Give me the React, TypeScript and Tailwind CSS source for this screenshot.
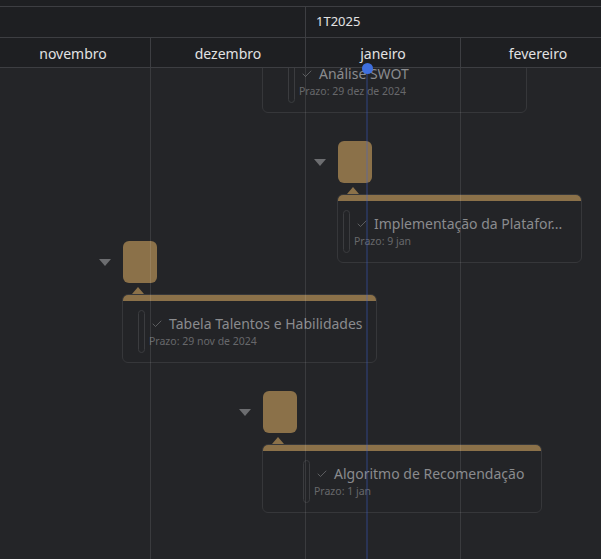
import { Check } from 'lucide-react'

type Task = {
  title: string
  due: string
  left: number
  top: number
  width: number
  inset: number
}

const TASKS: Task[] = [
  { title: 'Análise SWOT', due: 'Prazo: 29 dez de 2024', left: 262, top: -24, width: 265, inset: 25 },
  { title: 'Implementação da Platafor...', due: 'Prazo: 9 jan', left: 337, top: 126, width: 245, inset: 5 },
  { title: 'Tabela Talentos e Habilidades', due: 'Prazo: 29 nov de 2024', left: 122, top: 226, width: 255, inset: 15 },
  { title: 'Algoritmo de Recomendação', due: 'Prazo: 1 jan', left: 262, top: 376, width: 280, inset: 40 }
]

const MONTHS = ['novembro', 'dezembro', 'janeiro', 'fevereiro']

const TaskCard = ({ task }: { task: Task }): React.ReactElement => (
  <div className="absolute" style={{ left: task.left, top: task.top, width: task.width }}>
    {/* collapse caret */}
    <div className="absolute left-[-23px] top-[-35px] w-0 h-0 border-l-[6px] border-r-[6px] border-t-[7px] border-l-transparent border-r-transparent border-t-[#6c6d70]" />
    {/* milestone square */}
    <div className="absolute left-px top-[-53px] w-[34px] h-[42px] rounded-[6px] bg-[#8b7149]" />
    <div className="absolute left-[10px] top-[-7px] w-0 h-0 border-l-[6px] border-r-[6px] border-b-[7px] border-l-transparent border-r-transparent border-b-[#8b7149]" />
    <div className="h-[69px] rounded-md border border-[#36373a] overflow-hidden bg-[#232427]">
      <div className="h-[6px] bg-[#8b7149]" />
      <div className="flex pt-[9px]" style={{ paddingLeft: task.inset }}>
        <div className="w-[7px] h-[43px] rounded-full border border-[#3b3c3f] shrink-0" />
        <div className="ml-[4px] mt-[5px] flex flex-col min-w-0">
          <div className="flex items-center pl-[2px] h-[18px]">
            <Check size={12} strokeWidth={1.5} className="text-[#6f7073] shrink-0" />
            <span className="ml-[6px] text-[14px] leading-[18px] text-[#8a8b8e] whitespace-nowrap">
              {task.title}
            </span>
          </div>
          <span className="mt-px text-[10.5px] leading-[14px] text-[#67686b] whitespace-nowrap">{task.due}</span>
        </div>
      </div>
    </div>
  </div>
)

export default function App(): React.ReactElement {
  return (
    <div
      className="relative w-[601px] h-[559px] overflow-hidden bg-[#242528] flex flex-col"
      style={{ fontFamily: '"Noto Sans", "Open Sans", sans-serif' }}
    >
      {/* timeline header */}
      <div className="shrink-0 bg-[#1e1f22] text-[#e2e2e3] z-10">
        <div className="h-[7px] border-b border-[#3d3e42]" />
        <div className="flex h-[31px] border-b border-[#3d3e42] ml-[-4px]">
          <div className="w-[310px] shrink-0 border-r border-[#3d3e42]" />
          <div className="flex items-center pl-[10px] text-[13px]">1T2025</div>
        </div>
        <div className="flex h-[30px] border-b border-[#3d3e42] ml-[-4px]">
          {MONTHS.map((m) => (
            <div
              key={m}
              className="w-[155px] shrink-0 border-r border-[#3d3e42] flex items-center justify-center text-[14px] pt-px"
            >
              {m}
            </div>
          ))}
        </div>
      </div>

      {/* gantt canvas */}
      <div className="relative flex-1 overflow-hidden">
        {TASKS.map((t) => (
          <TaskCard key={t.title} task={t} />
        ))}
        {/* column lines */}
        <div className="absolute inset-0 flex ml-[-4px] pointer-events-none">
          {MONTHS.map((m) => (
            <div key={m} className="w-[155px] shrink-0 border-r border-white/10" />
          ))}
        </div>
        {/* today marker */}
        <div className="absolute left-[366px] top-0 bottom-0 w-[2px] bg-[#3b64dc]/25 pointer-events-none" />
      </div>
      <div className="absolute left-[362px] top-[63px] w-[11px] h-[11px] rounded-full bg-[#3f6fdf] z-20" />
    </div>
  )
}
